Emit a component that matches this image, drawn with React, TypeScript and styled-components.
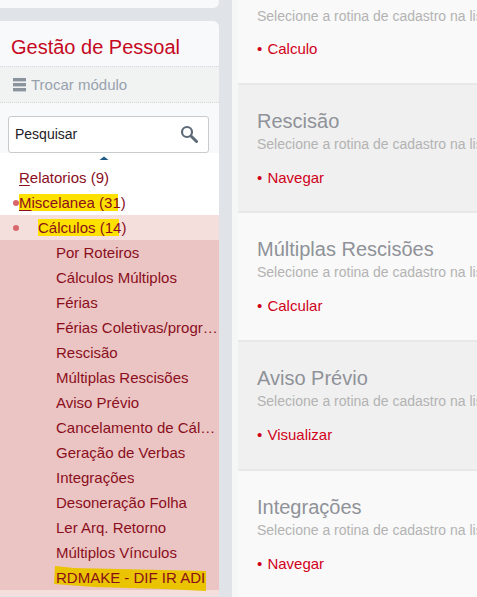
import React from "react";
import styled, { createGlobalStyle } from "styled-components";

const Global = createGlobalStyle`
  html, body { margin: 0; padding: 0; height: 597px; overflow: hidden; background: #e0e4e8; }
  body { font-family: "Liberation Sans", Arial, sans-serif; }
  * { box-sizing: border-box; }
`;

const Page = styled.div`
  display: flex;
  width: 477px;
  height: 597px;
  overflow: hidden;
  background: #e0e4e8;
`;

const Sidebar = styled.aside`
  width: 232px;
  flex: none;
  padding-right: 13px;
`;

const StubCard = styled.div`
  height: 8px;
  background: #f8f9fb;
  border-radius: 0 0 6px 0;
  margin-bottom: 13px;
`;

const Card = styled.div`
  border-radius: 0 6px 0 0;
  background: #f8f9fb;
  overflow: hidden;
`;

const Title = styled.h1`
  margin: 0;
  height: 45px;
  padding: 14px 0 0 11px;
  font-size: 20px;
  line-height: 24px;
  font-weight: 400;
  color: #c5091f;
`;

const Switcher = styled.div`
  height: 37px;
  display: flex;
  align-items: center;
  gap: 5px;
  padding-left: 13px;
  background: #f1f3f3;
  border-top: 1px dotted #d5d8da;
  border-bottom: 1px dotted #d5d8da;
  font-size: 15px;
  color: #98a2ad;
`;

const SearchArea = styled.div`
  height: 50px;
  padding: 13px 10px 0 8px;
`;

const SearchBox = styled.div`
  height: 37px;
  display: flex;
  align-items: center;
  justify-content: space-between;
  padding: 0 10px 2px 6px;
  background: #fff;
  border: 1px solid #c8cacc;
  border-radius: 3px;
  font-size: 14px;
  color: #1d2125;
`;

const Tree = styled.div`
  background: #fff;
`;

const CaretRow = styled.div`
  height: 12px;
  display: flex;
  justify-content: center;
  padding: 2px 11px 0 0;
`;

const Row = styled.div<{ $level: 0 | 1 | 2 }>`
  position: relative;
  height: 25px;
  display: flex;
  align-items: center;
  padding-left: ${(p) => [19, 38, 56][p.$level]}px;
  font-size: 15px;
  white-space: nowrap;
  color: #8a0f1c;
  background: ${(p) => ["#fff", "#f5dfdd", "#ebc4c4"][p.$level]};
`;

const Label = styled.span`
  display: block;
  max-width: 162px;
  overflow: hidden;
  text-overflow: ellipsis;
  white-space: nowrap;
`;

const Key = styled.span`
  text-decoration: underline;
  text-underline-offset: 2px;
`;

const Mark = styled.span<{ $pad: number; $cut: number }>`
  background: linear-gradient(#ffe100, #ffe100) no-repeat left top / calc(100% - ${(p) => p.$cut}px) 100%;
  padding: 1px 0 1px ${(p) => p.$pad}px;
  margin-left: -${(p) => p.$pad}px;
`;

const Bullet = styled.i`
  position: absolute;
  left: 13px;
  top: 10px;
  width: 6px;
  height: 6px;
  border-radius: 50%;
  background: #d9686c;
`;

const Scribble = styled.svg`
  position: absolute;
  left: 54px;
  top: 1px;
  width: 153px;
  height: 26px;
`;

const Ink = styled.span`
  position: relative;
`;

const TailRow = styled.div`
  height: 6px;
  background: #f5dfdd;
`;

const Main = styled.main`
  flex: 1;
  min-width: 0;
  padding-left: 6px;
  background: #f5f6f6;
`;

const Heading = styled.h2`
  margin: 0;
  font-size: 20px;
  line-height: 30px;
  font-weight: 400;
  color: #8f9298;
`;

const Hint = styled.p`
  margin: 1px 0 0;
  font-size: 14px;
  line-height: 15px;
  color: #b3b3b3;
`;

const Action = styled.div`
  margin-top: 16px;
  font-size: 15px;
  line-height: 20px;
  word-spacing: 1px;
  color: #d0021b;
`;

const Panel = styled.section<{ $shade: boolean; $h: number }>`
  height: ${(p) => p.$h}px;
  padding: 21px 0 0 19px;
  background: ${(p) => (p.$shade ? "#f0f0f0" : "#f9f9f9")};
  border-bottom: 2px solid #e8e8e8;
  overflow: hidden;
  white-space: nowrap;
`;

const FirstPanel = styled(Panel)`
  padding-top: 8px;
  ${Action} {
    margin-top: 15px;
  }
`;

const hint = "Selecione a rotina de cadastro na lista ao lado";

const items = [
  "Por Roteiros",
  "Cálculos Múltiplos",
  "Férias",
  "Férias Coletivas/programadas",
  "Rescisão",
  "Múltiplas Rescisões",
  "Aviso Prévio",
  "Cancelamento de Cálculos",
  "Geração de Verbas",
  "Integrações",
  "Desoneração Folha",
  "Ler Arq. Retorno",
  "Múltiplos Vínculos",
];

const panels = [
  { title: "Rescisão", action: "Navegar", shade: true, h: 128 },
  { title: "Múltiplas Rescisões", action: "Calcular", shade: false, h: 129 },
  { title: "Aviso Prévio", action: "Visualizar", shade: true, h: 129 },
  { title: "Integrações", action: "Navegar", shade: false, h: 129 },
];

export default function App() {
  return (
    <Page>
      <Global />
      <Sidebar>
        <StubCard />
        <Card>
          <Title>Gestão de Pessoal</Title>
          <Switcher>
            <svg width="13" height="14" viewBox="0 0 13 14" fill="#8b949c">
              <rect y="0" width="13" height="3.4" />
              <rect y="5" width="13" height="3.4" />
              <rect y="10" width="13" height="3.4" />
            </svg>
            Trocar módulo
          </Switcher>
          <SearchArea>
            <SearchBox>
              Pesquisar
              <svg width="18" height="18" viewBox="0 0 18 18" fill="none">
                <circle cx="7" cy="7" r="5" stroke="#5d6b78" strokeWidth="2.2" />
                <path d="M11 11l5.5 5.5" stroke="#5d6b78" strokeWidth="3" strokeLinecap="round" />
              </svg>
            </SearchBox>
          </SearchArea>
          <Tree>
            <CaretRow>
              <svg width="10" height="6" viewBox="0 0 10 6" fill="none">
                <path d="M0.5 5L5 1.5L9.5 5Z" fill="#1f5a85" />
              </svg>
            </CaretRow>
            <Row $level={0}>
              <Label><Key>R</Key>elatorios (9)</Label>
            </Row>
            <Row $level={0}>
              <Bullet />
              <Label><Mark $pad={2} $cut={3}><Key>M</Key>iscelanea (31</Mark>)</Label>
            </Row>
            <Row $level={1}>
              <Bullet />
              <Label><Mark $pad={1} $cut={2}>Cálculos (14</Mark>)</Label>
            </Row>
            {items.map((t) => (
              <Row $level={2} key={t}>
                <Label>{t}</Label>
              </Row>
            ))}
            <Row $level={2}>
              <Scribble viewBox="0 0 153 26">
                <path d="M1 0L20 2L152 5L152 25L110 23L40 21L0 18Z" fill="#eac400" />
              </Scribble>
              <Ink>RDMAKE - DIF IR ADI</Ink>
            </Row>
            <TailRow />
          </Tree>
        </Card>
      </Sidebar>
      <Main>
        <FirstPanel $shade={false} $h={85}>
          <Hint>{hint}</Hint>
          <Action>• Calculo</Action>
        </FirstPanel>
        {panels.map((p) => (
          <Panel key={p.title} $shade={p.shade} $h={p.h}>
            <Heading>{p.title}</Heading>
            <Hint>{hint}</Hint>
            <Action>• {p.action}</Action>
          </Panel>
        ))}
      </Main>
    </Page>
  );
}
